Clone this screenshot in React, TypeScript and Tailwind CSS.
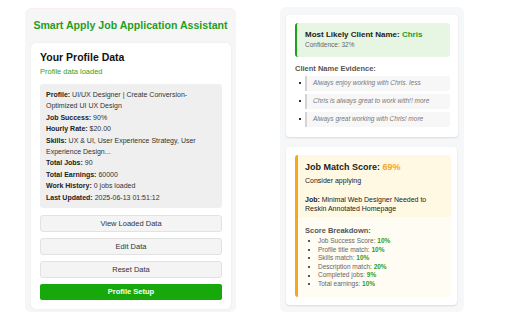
import React from "react";

const Row = ({ label, children }: { label: string; children: React.ReactNode }) => (
  <div>
    <span className="font-bold text-[#222]">{label}</span> {children}
  </div>
);

export default function App() {
  return (
    <div
      className="w-[512px] h-[320px] bg-white flex items-start"
      style={{ fontFamily: '"Liberation Sans", Arial, sans-serif' }}
    >
      {/* Left panel */}
      <div className="ml-[25px] mt-[8px] w-[211px] h-[304px] bg-[#f6f6f7] rounded-[6px] border-t border-[#fbeef0] flex flex-col">
        <div className="h-[34px] flex items-center justify-center text-[10.6px] font-bold text-[#1f9e1f]">
          Smart Apply Job Application Assistant
        </div>
        <div className="ml-[6px] w-[200px] h-[266px] bg-white rounded-[5px] shadow-[0_0_2px_rgba(0,0,0,0.08)] px-[9px] pt-[8px] flex flex-col">
          <div className="text-[10.5px] font-bold text-[#111] leading-[13px]">Your Profile Data</div>
          <div className="mt-[2px] text-[7.5px] text-[#2aa52a] leading-[12px]">Profile data loaded</div>
          <div className="mt-[6px] bg-[#efefef] rounded-[3px] px-[6px] py-[5px] text-[7px] leading-[11.4px] text-[#333]">
            <Row label="Profile:">UI/UX Designer | Create Conversion-Optimized UI UX Design</Row>
            <Row label="Job Success:">90%</Row>
            <Row label="Hourly Rate:">$20.00</Row>
            <Row label="Skills:">UX &amp; UI, User Experience Strategy, User Experience Design...</Row>
            <Row label="Total Jobs:">90</Row>
            <Row label="Total Earnings:">60000</Row>
            <Row label="Work History:">0 jobs loaded</Row>
            <Row label="Last Updated:">2025-06-13 01:51:12</Row>
          </div>
          <div className="mt-[7px] flex flex-col gap-[6px]">
            {["View Loaded Data", "Edit Data", "Reset Data"].map((t) => (
              <div
                key={t}
                className="h-[17px] flex items-center justify-center bg-[#f4f4f4] border border-[#e2e2e2] rounded-[3px] text-[7.5px] text-[#333]"
              >
                {t}
              </div>
            ))}
            <div className="h-[16px] flex items-center justify-center bg-[#17a80b] rounded-[2px] text-[7.5px] font-bold text-white">
              Profile Setup
            </div>
          </div>
        </div>
      </div>

      {/* Right panel */}
      <div className="ml-[44px] mt-[7px] w-[184px] h-[305px] bg-[#f6f7f8] rounded-[6px] px-[6px] pt-[8px] flex flex-col gap-[10px]">
        <div className="w-[172px] h-[122px] bg-white rounded-[4px] shadow-[0_1px_2px_rgba(0,0,0,0.12)] pl-[9px] pr-[8px] pt-[8px]">
          <div className="h-[34px] bg-[#e6f6e3] border-l-2 border-[#1fa01f] rounded-[3px] pl-[8px] pt-[6px]">
            <div className="text-[8px] font-bold text-[#222] leading-[11px]">
              Most Likely Client Name: <span className="text-[#1f9a1f]">Chris</span>
            </div>
            <div className="text-[6.5px] text-[#666] leading-[10px]">Confidence: 32%</div>
          </div>
          <div className="mt-[7px] text-[7.5px] font-bold text-[#555] leading-[10px]">Client Name Evidence:</div>
          <div className="mt-[2px] flex flex-col gap-[3.3px]">
            {[
              "Always enjoy working with Chris. less",
              "Chris is always great to work with!! more",
              "Always great working with Chris! more",
            ].map((t) => (
              <div key={t} className="flex items-center">
                <div className="w-[10px] flex justify-center">
                  <div className="w-[2px] h-[2px] bg-[#333]" />
                </div>
                <div className="w-[145px] h-[14.7px] bg-[#f7f7f7] border-l-2 border-[#d4d4d4] rounded-r-[2px] pl-[6px] flex items-center text-[6.5px] italic text-[#777]">
                  {t}
                </div>
              </div>
            ))}
          </div>
        </div>

        <div className="w-[171px] h-[158px] bg-white rounded-[4px] shadow-[0_1px_2px_rgba(0,0,0,0.12)] pl-[9px] pr-[6px] pt-[8px]">
          <div className="h-[142px] bg-[#fff8e3] border-l-[3px] border-[#f5a81c] rounded-[3px] flex flex-col">
            <div className="pl-[7px] pr-[12px] pt-[6px] h-[62px]">
              <div className="text-[9px] font-bold text-[#222] leading-[12px]">
                Job Match Score: <span className="text-[#f5a623]">69%</span>
              </div>
              <div className="mt-[3px] text-[7px] text-[#222] leading-[10px]">Consider applying</div>
              <div className="mt-[10px] text-[7px] text-[#222] leading-[8.5px]">
                <span className="font-bold">Job:</span> Minimal Web Designer Needed to Reskin Annotated Homepage
              </div>
            </div>
            <div className="flex-1 bg-[#fffcf3] pl-[7px] pt-[9px]">
              <div className="text-[7.5px] font-bold text-[#555] leading-[10px]">Score Breakdown:</div>
              <ul className="mt-[1px] text-[6.5px] text-[#666] leading-[8.6px]">
                {[
                  ["Job Success Score:", "10%"],
                  ["Profile title match:", "10%"],
                  ["Skills match:", "10%"],
                  ["Description match:", "20%"],
                  ["Completed jobs:", "9%"],
                  ["Total earnings:", "10%"],
                ].map(([a, b]) => (
                  <li key={a} className="flex items-center">
                    <span className="w-[4px] h-[2px] mr-[6px] ml-[3px] flex items-center">
                      <span className="w-[2px] h-[2px] bg-[#222] rounded-full" />
                    </span>
                    {a}&nbsp;<span className="font-bold text-[#2a9d2a]">{b}</span>
                  </li>
                ))}
              </ul>
            </div>
          </div>
        </div>
      </div>
    </div>
  );
}
